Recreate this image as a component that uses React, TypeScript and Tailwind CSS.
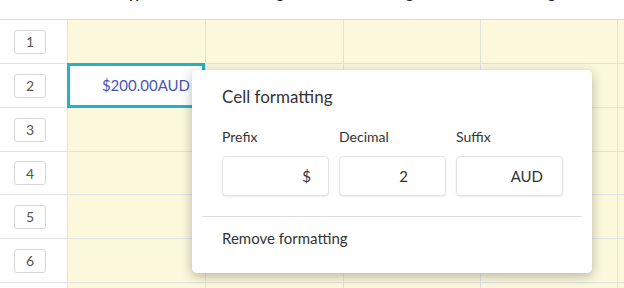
import React from "react";

const cols = [
  { w: "w-[138px]", title: "Type" },
  { w: "w-[138px]", title: "Budget" },
  { w: "w-[137px]", title: "Region" },
  { w: "w-[137px]", title: "Target" },
];

const rowHeights = ["h-[44px]", "h-[44px]", "h-[44px]", "h-[43px]", "h-[44px]", "h-[44px]", "h-[44px]"];

export default function App() {
  return (
    <div className="relative w-[624px] h-[288px] overflow-hidden bg-white font-['Lato','Noto_Sans',sans-serif] text-[#333]">
      {/* header */}
      <div className="flex h-[20px] border-b border-[#dcdcdc] overflow-hidden">
        <div className="w-[67px] shrink-0" />
        {cols.map((c, i) => (
          <div key={i} className={`${c.w} shrink-0 text-center`}>
            <div className="-mt-[16px] text-[14px] leading-[20px] font-bold text-[#222]">{c.title}</div>
          </div>
        ))}
      </div>
      {/* rows */}
      {rowHeights.map((h, r) => (
        <div key={r} className={`flex ${h} border-b border-[#e2e2e2]`}>
          <div className="w-[67px] shrink-0 flex items-center pl-[14px]">
            <div className="w-[32px] h-[24px] flex items-center justify-center rounded-[3px] border border-[#d6d6d6] text-[14px] text-[#555] bg-white">
              {r + 1}
            </div>
          </div>
          {cols.map((c, i) => {
            const selected = r === 1 && i === 0;
            return (
              <div
                key={i}
                className={`${c.w} shrink-0 border-l border-[#e2e2e2] ${selected ? "relative bg-white" : "bg-[#fcf8dc]"}`}
              >
                {selected && (
                  <div className="absolute -left-[1px] -top-[1px] -right-[0px] -bottom-[1px] border-[3px] border-[#22b3c6] flex items-center justify-end pr-[12px]">
                    <span className="text-[15px] text-[#4656b3]">$200.00AUD</span>
                  </div>
                )}
              </div>
            );
          })}
          <div className="flex-1 border-l border-[#e2e2e2] bg-[#fcf8dc]" />
        </div>
      ))}

      {/* popup */}
      <div className="absolute left-[192px] top-[70px] w-[400px] h-[203px] bg-white rounded-[5px] shadow-[0_3px_12px_rgba(0,0,0,0.28)] px-[10px] pt-[15px]">
        <div className="px-[20px]">
          <div className="text-[17px] leading-[24px] text-[#333]">Cell formatting</div>
          <div className="mt-[18px] flex gap-[10px]">
            {[
              { label: "Prefix", value: "$", pr: "pr-[17px]" },
              { label: "Decimal", value: "2", pr: "pr-[37px]" },
              { label: "Suffix", value: "AUD", pr: "pr-[19px]" },
            ].map((f) => (
              <div key={f.label} className="w-[107px]">
                <div className="text-[14px] leading-[20px] text-[#333]">{f.label}</div>
                <input
                  readOnly
                  value={f.value}
                  className={`mt-[9px] w-[107px] h-[40px] rounded-[4px] border border-[#e3e3e3] bg-white text-right ${f.pr} text-[15px] text-[#333] shadow-[0_1px_2px_rgba(0,0,0,0.08)] outline-none font-['Lato',sans-serif]`}
                />
              </div>
            ))}
          </div>
        </div>
        <div className="mt-[20px] border-t border-[#dedede]" />
        <div className="px-[20px] mt-[11px] text-[15px] leading-[20px] text-[#333]">Remove formatting</div>
      </div>
    </div>
  );
}
